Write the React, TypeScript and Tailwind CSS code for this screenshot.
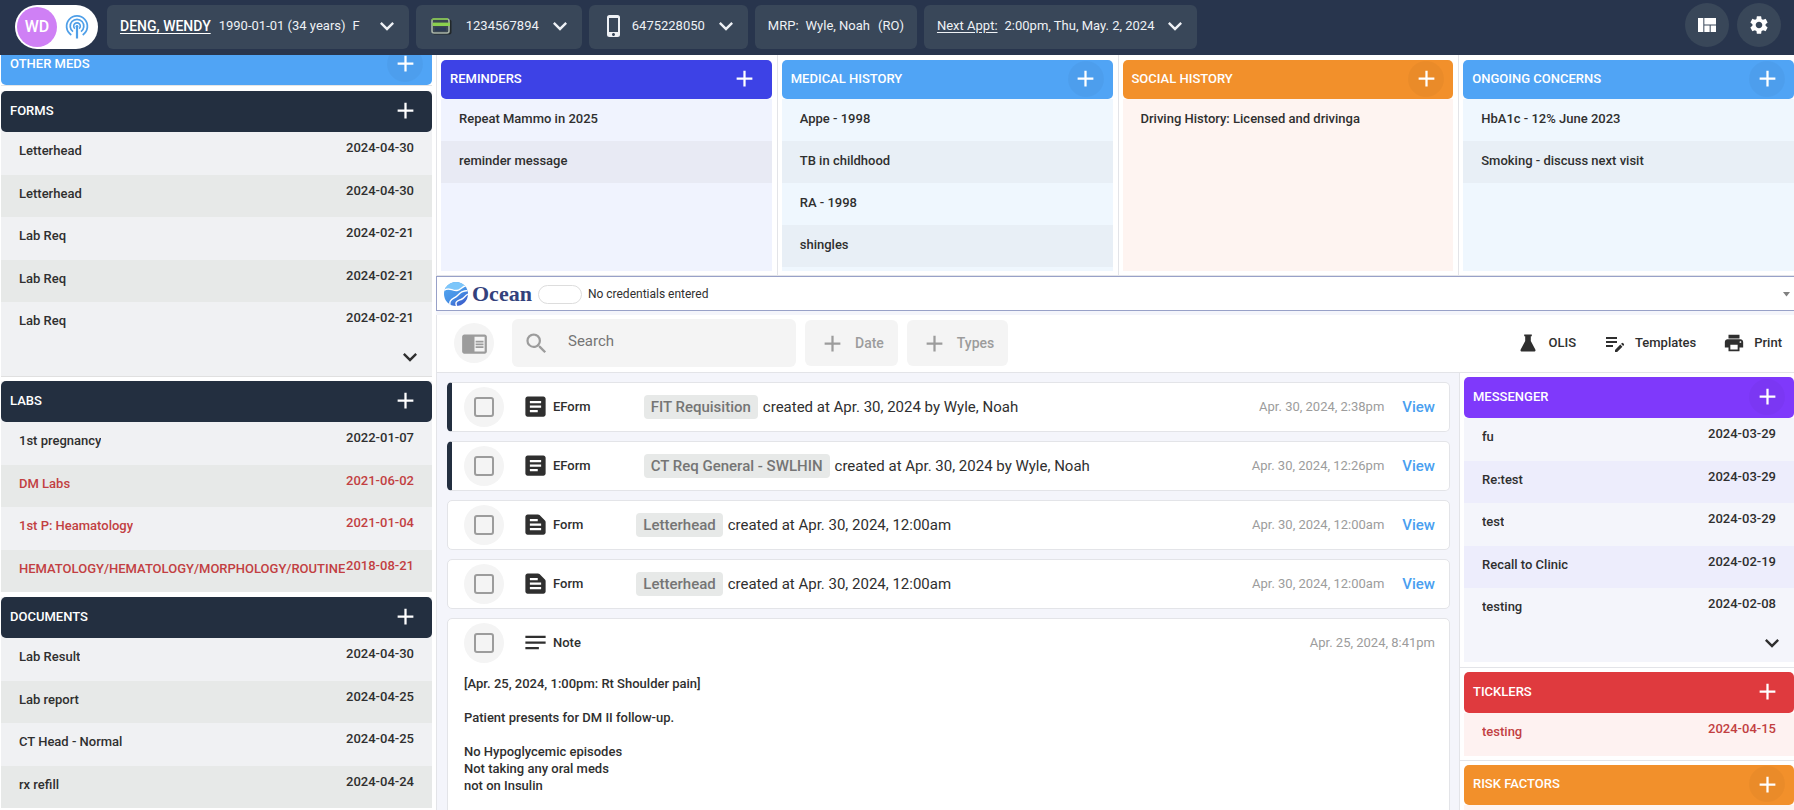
import type { ReactNode } from "react";
import type { IconType } from "react-icons";
import {
  MdAdd,
  MdArticle,
  MdChromeReaderMode,
  MdEditNote,
  MdExpandMore,
  MdNotes,
  MdPhoneIphone,
  MdPrint,
  MdSearch,
  MdSettings,
  MdTextSnippet,
  MdViewQuilt,
} from "react-icons/md";

type Item = { title: string; date?: string; alert?: boolean };

const forms: Item[] = [
  { title: "Letterhead", date: "2024-04-30" },
  { title: "Letterhead", date: "2024-04-30" },
  { title: "Lab Req", date: "2024-02-21" },
  { title: "Lab Req", date: "2024-02-21" },
  { title: "Lab Req", date: "2024-02-21" },
];

const labs: Item[] = [
  { title: "1st pregnancy", date: "2022-01-07" },
  { title: "DM Labs", date: "2021-06-02", alert: true },
  { title: "1st P: Heamatology", date: "2021-01-04", alert: true },
  { title: "HEMATOLOGY/HEMATOLOGY/MORPHOLOGY/ROUTINE", date: "2018-08-21", alert: true },
];

const documents: Item[] = [
  { title: "Lab Result", date: "2024-04-30" },
  { title: "Lab report", date: "2024-04-25" },
  { title: "CT Head - Normal", date: "2024-04-25" },
  { title: "rx refill", date: "2024-04-24" },
];

const messages: Item[] = [
  { title: "fu", date: "2024-03-29" },
  { title: "Re:test", date: "2024-03-29" },
  { title: "test", date: "2024-03-29" },
  { title: "Recall to Clinic", date: "2024-02-19" },
  { title: "testing", date: "2024-02-08" },
];

const ticklers: Item[] = [{ title: "testing", date: "2024-04-15", alert: true }];

const summaries = [
  {
    title: "REMINDERS",
    head: "bg-[#3d42e6]",
    body: "bg-[#f0f3fe]",
    stripe: "even:bg-[#e8eaf4]",
    items: ["Repeat Mammo in 2025", "reminder message"],
  },
  {
    title: "MEDICAL HISTORY",
    head: "bg-[#50a4f5]",
    shaded: true,
    body: "bg-[#eff7fe]",
    stripe: "even:bg-[#e8eff6]",
    items: ["Appe - 1998", "TB in childhood", "RA - 1998", "shingles"],
  },
  {
    title: "SOCIAL HISTORY",
    head: "bg-[#f2902b]",
    shaded: true,
    body: "bg-[#fef4f1]",
    stripe: "even:bg-[#f6ebe8]",
    items: ["Driving History: Licensed and drivinga"],
  },
  {
    title: "ONGOING CONCERNS",
    head: "bg-[#50a4f5]",
    shaded: true,
    body: "bg-[#eff7fe]",
    stripe: "even:bg-[#e8eff6]",
    items: ["HbA1c - 12% June 2023", "Smoking - discuss next visit"],
  },
];

type Entry = {
  kind: string;
  icon: IconType;
  tag?: string;
  text?: string;
  date: string;
  marked?: boolean;
  note?: string;
};

const entries: Entry[] = [
  {
    kind: "EForm",
    icon: MdArticle,
    tag: "FIT Requisition",
    text: "created at Apr. 30, 2024 by Wyle, Noah",
    date: "Apr. 30, 2024, 2:38pm",
    marked: true,
  },
  {
    kind: "EForm",
    icon: MdArticle,
    tag: "CT Req General - SWLHIN",
    text: "created at Apr. 30, 2024 by Wyle, Noah",
    date: "Apr. 30, 2024, 12:26pm",
    marked: true,
  },
  {
    kind: "Form",
    icon: MdTextSnippet,
    tag: "Letterhead",
    text: "created at Apr. 30, 2024, 12:00am",
    date: "Apr. 30, 2024, 12:00am",
  },
  {
    kind: "Form",
    icon: MdTextSnippet,
    tag: "Letterhead",
    text: "created at Apr. 30, 2024, 12:00am",
    date: "Apr. 30, 2024, 12:00am",
  },
  {
    kind: "Note",
    icon: MdNotes,
    date: "Apr. 25, 2024, 8:41pm",
    note: "[Apr. 25, 2024, 1:00pm: Rt Shoulder pain]\n\nPatient presents for DM II follow-up.\n\nNo Hypoglycemic episodes\nNot taking any oral meds\nnot on Insulin\n",
  },
];

function BroadcastIcon() {
  return (
    <svg viewBox="0 0 24 28" className="h-7 w-6" fill="none" stroke="#4f9fe8" aria-hidden="true">
      <path d="M6.3 22 A10.4 10.4 0 1 1 17.7 22" strokeWidth="1.8" />
      <path d="M8 18.6 A6.8 6.8 0 1 1 16 18.6" strokeWidth="1.7" />
      <path d="M9.9 15.7 A3.3 3.3 0 1 1 14.1 15.7" strokeWidth="1.6" />
      <circle cx="12" cy="13.2" r="1.3" fill="#4f9fe8" stroke="none" />
      <path d="M12 13 V25.5" strokeWidth="2.2" />
    </svg>
  );
}

function CardIcon() {
  return (
    <svg viewBox="0 0 21 17" className="ml-[2px] h-[17px] w-[21px]" aria-hidden="true">
      <rect x="1.5" y="1.5" width="19" height="15" rx="2" fill="#22282a" />
      <rect x="1" y="1" width="17" height="14" rx="2" fill="#3a4650" stroke="#a9b4a8" strokeWidth="1.6" />
      <path d="M1 2.6 C1 1.6 1.8 1 2.6 1 H17" stroke="#7cc242" strokeWidth="1.4" fill="none" />
      <rect x="1.5" y="4.6" width="17.5" height="3.4" fill="#8bd04e" />
      <rect x="4" y="9.4" width="11" height="3.4" fill="#2b3a55" />
    </svg>
  );
}

function FlaskIcon() {
  return (
    <svg viewBox="0 0 16 18" className="h-[18px] w-4" fill="#2f2f2f" aria-hidden="true">
      <path d="M4.2 0.4 H11.8 V2.2 H10.8 V7 L15.3 15.4 C15.9 16.6 15.3 17.6 14 17.6 H2 C0.7 17.6 0.1 16.6 0.7 15.4 L5.2 7 V2.2 H4.2 Z" />
    </svg>
  );
}

function OceanGlobe() {
  return (
    <svg viewBox="0 0 24 24" className="size-6" aria-hidden="true">
      <defs>
        <clipPath id="globe">
          <circle cx="12" cy="12" r="12" />
        </clipPath>
        <linearGradient id="sea" x1="0" y1="0" x2="0.7" y2="1">
          <stop offset="0" stopColor="#55a9f2" />
          <stop offset="0.6" stopColor="#4792e6" />
          <stop offset="1" stopColor="#3b5ecb" />
        </linearGradient>
      </defs>
      <g clipPath="url(#globe)">
        <rect width="24" height="24" fill="url(#sea)" />
        <path d="M0 0 H24 V3 C18 4 17 7.500 13 8 C8 8.500 6 4 0 8 Z" fill="#7cc6fa" />
        <g fill="none" stroke="#fff" strokeWidth="1.4">
          <path d="M0 8.500 C5 4.500 8 9 13 8.500 C17 8 18 4 23 3.500" />
          <path d="M7 26 C3 17 10 17 13 14 C16 11 18 8.500 25 8.500" />
          <path d="M13 25 C10 19 14 19 18 17 C21 15.500 21 13 25 12" />
        </g>
      </g>
    </svg>
  );
}

function AddButton({ label, shaded }: { label: string; shaded?: boolean }) {
  return (
    <button
      type="button"
      aria-label={label}
      className={`flex size-9 items-center justify-center rounded-full ${shaded ? "bg-black/[0.03]" : ""}`}
    >
      <MdAdd className="size-[27px]" />
    </button>
  );
}

function PanelHeader({
  title,
  color,
  shaded,
  height = "h-[41px]",
}: {
  title: string;
  color: string;
  shaded?: boolean;
  height?: string;
}) {
  return (
    <header
      className={`flex shrink-0 items-center justify-between rounded-[5px] pr-[9px] pb-[2px] pl-[9px] text-white ${height} ${color}`}
    >
      <h2 className="font-medium">{title}</h2>
      <AddButton label={`Add to ${title}`} shaded={shaded} />
    </header>
  );
}

function DatedList({ items, stripe }: { items: Item[]; stripe: string }) {
  return (
    <ul>
      {items.map((item, i) => (
        <li
          key={i}
          className={`flex items-start justify-between pr-[18px] pl-[18px] leading-5 odd:h-[43px] even:h-[42px] ${stripe} ${item.alert ? "text-[#c23f42]" : "text-[#2f2f2f]"}`}
        >
          <a href="#item" className="mt-[9px] min-w-0 overflow-hidden whitespace-nowrap">
            {item.title}
          </a>
          <time className="mt-[6px] shrink-0">{item.date}</time>
        </li>
      ))}
    </ul>
  );
}

function ExpandButton({ label }: { label: string }) {
  return (
    <div className="flex h-[31px] items-start justify-end pr-2">
      <button type="button" aria-label={label} className="-mt-[2px] text-[#2f2f2f]">
        <MdExpandMore className="size-7" />
      </button>
    </div>
  );
}

function Chip({ children }: { children: ReactNode }) {
  return <div className="flex h-11 shrink-0 items-center rounded-md bg-[#394759] px-[13px] pb-[2px]">{children}</div>;
}

function ChipArrow({ label }: { label: string }) {
  return (
    <button type="button" aria-label={label} className="-mr-[5px] ml-[7px]">
      <MdExpandMore className="size-7" />
    </button>
  );
}

function TopBar() {
  return (
    <header className="flex h-[55px] shrink-0 items-start bg-[#28354d] pt-[5px] pr-[13px] pl-[15px] text-[#eef1f5]">
      <div className="mr-[9px] flex h-11 w-[83px] shrink-0 items-center rounded-full bg-white pl-[2px]">
        <span className="flex size-10 items-center justify-center rounded-full bg-[#cf80f5] text-base font-medium text-white">
          WD
        </span>
        <button type="button" aria-label="Broadcast" className="ml-2">
          <BroadcastIcon />
        </button>
      </div>
      <div className="flex items-center gap-[7px]">
        <Chip>
          <a href="#patient" className="text-sm font-medium text-white underline underline-offset-2">
            DENG, WENDY
          </a>
          <span className="ml-2">1990-01-01 (34 years)</span>
          <span className="mr-[6px] ml-[7px]">F</span>
          <ChipArrow label="Patient details" />
        </Chip>
        <Chip>
          <CardIcon />
          <span className="ml-[14px]">1234567894</span>
          <ChipArrow label="Health card details" />
        </Chip>
        <Chip>
          <MdPhoneIphone className="size-6" />
          <span className="ml-[6px]">6475228050</span>
          <ChipArrow label="Phone details" />
        </Chip>
        <Chip>
          <span>MRP:</span>
          <span className="ml-[7px]">Wyle, Noah</span>
          <span className="ml-2">(RO)</span>
        </Chip>
        <Chip>
          <a href="#appointment" className="underline underline-offset-2">
            Next Appt:
          </a>
          <span className="ml-[7px]">2:00pm, Thu, May. 2, 2024</span>
          <ChipArrow label="Appointment details" />
        </Chip>
      </div>
      <div className="-mt-[2px] ml-auto flex gap-2 text-white">
        <button
          type="button"
          aria-label="Layout"
          className="flex size-11 items-center justify-center rounded-full bg-[#394759]"
        >
          <MdViewQuilt className="size-6" />
        </button>
        <button
          type="button"
          aria-label="Settings"
          className="flex size-11 items-center justify-center rounded-full bg-[#394759]"
        >
          <MdSettings className="size-[22px]" />
        </button>
      </div>
    </header>
  );
}

function Sidebar() {
  const stripe = "even:bg-[#e7e9e8]";
  return (
    <aside className="flex h-full w-[436px] shrink-0 flex-col justify-end overflow-hidden pr-1 pb-[2px] pl-px font-medium">
      <section className="border-b border-[#e5e5e5]">
        <PanelHeader title="OTHER MEDS" color="bg-[#50a4f5]" shaded />
      </section>
      <section className="mt-[5px] border-b border-[#e0e0e0] bg-[#f0f1f3]">
        <PanelHeader title="FORMS" color="bg-[#232f40]" />
        <DatedList items={forms} stripe={stripe} />
        <ExpandButton label="Show more forms" />
      </section>
      <section className="mt-1 bg-[#f0f1f3]">
        <PanelHeader title="LABS" color="bg-[#232f40]" />
        <DatedList items={labs} stripe={stripe} />
      </section>
      <section className="mt-[5px] bg-[#f0f1f3]">
        <PanelHeader title="DOCUMENTS" color="bg-[#232f40]" />
        <DatedList items={documents} stripe={stripe} />
      </section>
    </aside>
  );
}

function Summaries() {
  return (
    <div className="shrink-0 overflow-hidden border-b border-[#e3e4e8] bg-white font-medium">
      <div className="-mr-[5px] grid grid-cols-4">
        {summaries.map((s) => (
          <section
            key={s.title}
            className="flex h-[220px] flex-col border-l border-[#e3e4e8] pt-[5px] pr-[5px] pb-1 pl-1"
          >
            <PanelHeader title={s.title} color={s.head} shaded={s.shaded} height="h-[39px]" />
            <ul className={`grow ${s.body}`}>
              {s.items.map((t) => (
                <li key={t} className={`flex h-[42px] items-center pb-[3px] pl-[18px] ${s.stripe}`}>
                  <a href="#item">{t}</a>
                </li>
              ))}
            </ul>
          </section>
        ))}
      </div>
    </div>
  );
}

function OceanBar() {
  return (
    <div className="flex h-[35px] shrink-0 items-center border border-r-0 border-[#98a1c8] bg-white pt-px pr-1 pl-[7px]">
      <OceanGlobe />
      <span className="ml-1 font-['Liberation_Serif',serif] text-[22px] leading-7 font-bold text-[#33417c]">Ocean</span>
      <span className="ml-[6px] h-[19px] w-11 rounded-full border border-[#dddddd]" />
      <span className="ml-[6px] text-xs">No credentials entered</span>
      <button type="button" aria-label="Ocean menu" className="ml-auto text-[#808080]">
        <svg viewBox="0 0 7 5" className="h-[5px] w-[7px]" fill="currentColor" aria-hidden="true">
          <path d="M0 0 H7 L3.5 4.5 Z" />
        </svg>
      </button>
    </div>
  );
}

function FilterButton({ children }: { children: ReactNode }) {
  return (
    <button
      type="button"
      className="ml-[9px] flex h-[46px] items-center rounded-md bg-[#f4f4f4] px-[14px] text-sm font-medium text-[#9c9c9c]"
    >
      <MdAdd className="mr-[9px] size-[27px]" />
      {children}
    </button>
  );
}

function Toolbar() {
  return (
    <div className="mt-1 flex h-[58px] shrink-0 items-center border-b border-l border-[#e3e4e8] bg-white pr-3 pb-px pl-[17px]">
      <button
        type="button"
        aria-label="Toggle reader view"
        className="flex size-10 items-center justify-center rounded-full bg-[#f4f4f4] text-[#9c9c9c]"
      >
        <MdChromeReaderMode className="size-[27px]" />
      </button>
      <div className="ml-[18px] flex h-12 w-[284px] items-center rounded-md bg-[#f4f4f4] pl-[11px]">
        <MdSearch className="size-[27px] shrink-0 text-[#9c9c9c]" />
        <input
          type="text"
          aria-label="Search"
          placeholder="Search"
          className="ml-[18px] w-full min-w-0 bg-transparent pb-1 text-[15px] outline-none placeholder:text-[#757575]"
        />
      </div>
      <FilterButton>Date</FilterButton>
      <FilterButton>Types</FilterButton>
      <div className="ml-auto flex items-center gap-[27px] text-[#2f2f2f]">
        <button type="button" className="flex items-center gap-3 font-medium">
          <FlaskIcon />
          OLIS
        </button>
        <button type="button" className="flex items-center gap-2 font-medium">
          <MdEditNote className="size-6" />
          Templates
        </button>
        <button type="button" className="flex items-center gap-[9px] font-medium">
          <MdPrint className="size-[22px]" />
          Print
        </button>
      </div>
    </div>
  );
}

function TimelineEntry({ entry, index }: { entry: Entry; index: number }) {
  const Icon = entry.icon;
  return (
    <li
      className={`shrink-0 overflow-hidden rounded-[5px] border border-[#e3e4e8] bg-white pr-[14px] ${entry.marked ? "border-l-[5px] border-l-[#232f40] pl-3" : "pl-4"} ${entry.note ? "pb-16" : ""}`}
    >
      <div className="flex h-12 items-center pb-px">
        <span className="flex size-10 shrink-0 items-center justify-center rounded-full bg-[#f4f4f4]">
          <input
            type="checkbox"
            aria-label={`Select ${entry.kind} ${index + 1}`}
            className="size-5 appearance-none rounded-[3px] border-2 border-[#9c9c9c]"
          />
        </span>
        <Icon className="ml-[18px] size-[27px] shrink-0 text-[#2f2f2f]" />
        <span className="ml-1 font-medium">{entry.kind}</span>
        {entry.tag && (
          <p className="ml-[53px] flex items-center text-[15px] leading-6">
            <span className="rounded bg-[#e7e9e8] px-[7px] font-medium text-[#757575]">{entry.tag}</span>
            <span className="ml-[5px]">{entry.text}</span>
          </p>
        )}
        <time className="ml-auto text-[#9c9c9c]">{entry.date}</time>
        {entry.tag && (
          <a href="#view" className="ml-[18px] text-[15px] font-medium text-[#4a9ff0]">
            View
          </a>
        )}
      </div>
      {entry.note && <p className="mt-2 leading-[17px] font-medium whitespace-pre-wrap">{entry.note}</p>}
    </li>
  );
}

function RightPanels() {
  return (
    <aside className="w-[335px] shrink-0 overflow-hidden border-l border-[#e3e4e8] bg-white font-medium">
      <section className="border-b border-[#e3e4e8] pt-1 pb-[5px] pl-1">
        <PanelHeader title="MESSENGER" color="bg-[#7f39fb]" shaded />
        <div className="bg-[#f4f5fb]">
          <DatedList items={messages} stripe="even:bg-[#ededfc]" />
          <ExpandButton label="Show more messages" />
        </div>
      </section>
      <section className="border-b border-[#e3e4e8] pt-1 pb-1 pl-1">
        <PanelHeader title="TICKLERS" color="bg-[#df3a3e]" />
        <div className="bg-[#fef2f1]">
          <DatedList items={ticklers} stripe="even:bg-[#f6e8e7]" />
        </div>
      </section>
      <section className="pt-1 pl-1">
        <PanelHeader title="RISK FACTORS" color="bg-[#f2902b]" shaded height="h-10" />
        <div className="h-10 bg-[#fef4f1]" />
      </section>
    </aside>
  );
}

export default function App() {
  return (
    <div className="flex h-screen flex-col overflow-hidden bg-white font-[Roboto,sans-serif] text-[13px] leading-5 text-[#2f2f2f]">
      <TopBar />
      <div className="flex min-h-0 grow">
        <Sidebar />
        <main className="flex min-w-0 grow flex-col bg-[#f4f5fb]">
          <Summaries />
          <OceanBar />
          <Toolbar />
          <div className="flex min-h-0 grow">
            <ul className="flex min-w-0 grow flex-col gap-[9px] overflow-hidden border-l border-[#e3e4e8] pt-[9px] pr-[9px] pl-[10px]">
              {entries.map((entry, i) => (
                <TimelineEntry key={i} entry={entry} index={i} />
              ))}
            </ul>
            <RightPanels />
          </div>
        </main>
      </div>
    </div>
  );
}
